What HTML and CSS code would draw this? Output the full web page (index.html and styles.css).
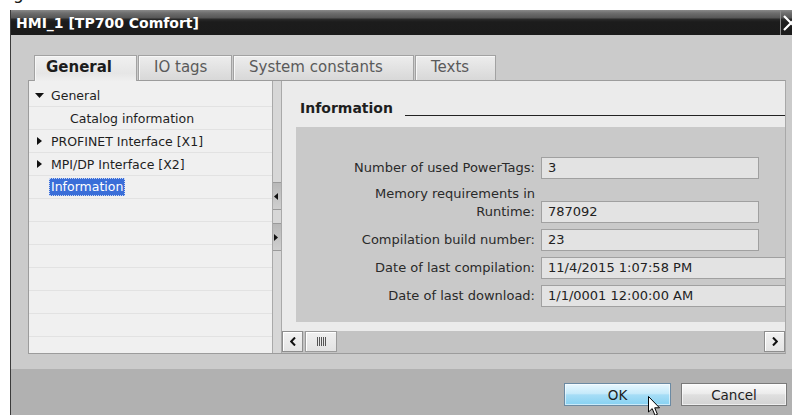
FILE: index.html
```html
<!DOCTYPE html>
<html lang="en">
<head>
<meta charset="utf-8">
<title>HMI_1 [TP700 Comfort]</title>
<link rel="stylesheet" href="styles.css">
</head>
<body>
<div class="page-top"><span class="cut-text">g</span></div>

<div class="dialog">
  <div class="titlebar">
    <span class="title">HMI_1 [TP700 Comfort]</span>
    <div class="close">
      <svg width="16" height="16" viewBox="0 0 16 16"><path d="M1 1 L15 15 M15 1 L1 15" stroke="#fff" stroke-width="2.2" fill="none"/></svg>
    </div>
  </div>

  <div class="dlg-body">
    <div class="tabstrip">
      <div class="tab active tab-general">General</div>
      <div class="tab tab-io">IO tags</div>
      <div class="tab tab-sys">System constants</div>
      <div class="tab tab-texts">Texts</div>
    </div>

    <div class="panel">
      <div class="tree">
        <div class="row"><span class="caret"><svg width="9" height="5" viewBox="0 0 9 5"><path d="M0 0 H9 L4.5 5 Z" fill="#111"/></svg></span>General</div>
        <div class="row child">Catalog information</div>
        <div class="row"><span class="caret"><svg class="c-right" width="5" height="8" viewBox="0 0 5 8"><path d="M0 0 L5 4 L0 8 Z" fill="#111"/></svg></span>PROFINET Interface [X1]</div>
        <div class="row"><span class="caret"><svg class="c-right" width="5" height="8" viewBox="0 0 5 8"><path d="M0 0 L5 4 L0 8 Z" fill="#111"/></svg></span>MPI/DP Interface [X2]</div>
        <div class="row"><span class="sel">Information</span></div>
        <div class="row"></div>
        <div class="row"></div>
        <div class="row"></div>
        <div class="row"></div>
        <div class="row"></div>
        <div class="row"></div>
        <div class="row"></div>
      </div>

      <div class="splitter">
        <div class="split-btn"><svg width="4" height="7" viewBox="0 0 4 7"><path d="M4 0 L0 3.5 L4 7 Z" fill="#111"/></svg></div>
        <div class="split-btn"><svg width="4" height="7" viewBox="0 0 4 7"><path d="M0 0 L4 3.5 L0 7 Z" fill="#111"/></svg></div>
      </div>

      <div class="pane">
        <div class="pane-view">
          <div class="heading">
            <span class="heading-text">Information</span>
            <span class="rule"></span>
          </div>
          <div class="form-box">
            <div class="form">
              <div class="label">Number of used PowerTags:</div>
              <div class="field">3</div>
              <div class="label">Memory requirements in<br>Runtime:</div>
              <div class="field">787092</div>
              <div class="label">Compilation build number:</div>
              <div class="field">23</div>
              <div class="label">Date of last compilation:</div>
              <div class="field wide">11/4/2015 1:07:58 PM</div>
              <div class="label">Date of last download:</div>
              <div class="field wide">1/1/0001 12:00:00 AM</div>
            </div>
          </div>
        </div>
        <div class="hscroll">
          <div class="sb-btn"><svg width="6" height="9" viewBox="0 0 6 9"><path d="M5 0.5 L1.2 4.5 L5 8.5" stroke="#111" stroke-width="2" fill="none"/></svg></div>
          <div class="sb-thumb"><svg width="9" height="9" viewBox="0 0 9 9"><path d="M0.5 0 V9 M2.5 0 V9 M4.5 0 V9 M6.5 0 V9 M8.5 0 V9" stroke="#555" stroke-width="1" fill="none"/></svg></div>
          <div class="sb-track"></div>
          <div class="sb-btn"><svg width="6" height="9" viewBox="0 0 6 9"><path d="M1 0.5 L4.8 4.5 L1 8.5" stroke="#111" stroke-width="2" fill="none"/></svg></div>
        </div>
      </div>
    </div>
  </div>

  <div class="footer">
    <button class="btn btn-ok">OK</button>
    <button class="btn btn-cancel">Cancel</button>
  </div>
</div>

<svg class="cursor" width="14" height="21" viewBox="0 0 14 21">
  <path d="M0.5 0.5 L0.5 16 L4.2 12.6 L7 19.3 L9.4 18.3 L6.7 11.8 L11.5 11.8 Z" fill="#fff" stroke="#000" stroke-width="1" stroke-linejoin="round"/>
</svg>
</body>
</html>
```

FILE: styles.css
```css
* { box-sizing: border-box; }

html, body { margin: 0; padding: 0; }

body {
  width: 792px;
  height: 415px;
  overflow: hidden;
  position: relative;
  background: #fff;
  font-family: "DejaVu Sans", "Liberation Sans", sans-serif;
  color: #222;
}

/* last line of the page above the dialog, mostly scrolled away */
.page-top {
  height: 10px;
  overflow: hidden;
  padding-left: 13px;
}
.cut-text {
  display: block;
  font-size: 17px;
  line-height: 17px;
  margin-top: -15px;
  color: #1a1a1a;
}

/* dialog window */
.dialog {
  margin-left: 10px;
  width: 790px;
  border-left: 1px solid #3b3b3b;
}

.titlebar {
  height: 25px;
  display: flex;
  align-items: center;
  background: linear-gradient(#8a8a8a 0, #6e6e6e 3px, #565656 8px, #2a2a2a 9px, #1c1c1c 12px, #1b1b1b 25px);
}
.title {
  flex: 1;
  padding-left: 5px;
  color: #fff;
  font-weight: bold;
  font-size: 14px;
}
.close {
  width: 20px;
  height: 25px;
  border-left: 1px solid #8a8a8a;
  padding: 5px 0 0 2px;
}
.close svg { display: block; }

.dlg-body {
  height: 334px;
  background: #cbcbcb;
  padding: 20px 0 0 17px;
}

/* tabs */
.tabstrip {
  display: flex;
  height: 25px;
  padding-left: 6px;
  position: relative;
  z-index: 1;
}
.tab {
  height: 25px;
  margin-right: 1px;
  padding-left: 15px;
  font-size: 15px;
  line-height: 23px;
  color: #5a5a5a;
  white-space: nowrap;
  border: 1px solid #a2a2a2;
  border-bottom: none;
  background: linear-gradient(#ededed, #d8d8d8);
  box-shadow: inset 1px 1px 0 #f7f7f7;
}
.tab.active {
  height: 26px;
  padding-left: 11px;
  font-weight: bold;
  color: #1c1c1c;
  background: linear-gradient(#f0f0f0, #e6e6e6 70%, #efefef);
}
.tab-general { width: 103px; }
.tab-io { width: 94px; }
.tab-sys { width: 181px; margin-right: 1px; }
.tab-texts { width: 81px; }

/* panel below the tabs */
.panel {
  width: 758px;
  height: 274px;
  display: flex;
  border: 1px solid #9c9c9c;
  border-right-color: #a8a8a8;
}

.tree {
  width: 243px;
  background: #f0f0f0;
  padding-top: 3px;
  overflow: hidden;
  font-size: 12.5px;
}
.row {
  height: 23px;
  border-bottom: 1px solid #e2e2e2;
  display: flex;
  align-items: center;
  padding-left: 6px;
  color: #1e1e1e;
  white-space: nowrap;
}
.caret {
  width: 16px;
  display: flex;
  align-items: center;
}
.caret svg { display: block; }
.caret .c-right { margin-left: 2px; }
.row.child { padding-left: 41px; }
.sel {
  margin-left: 14px;
  height: 18px;
  line-height: 16px;
  padding: 0 1px;
  background: #3a6ed8;
  color: #fff;
  border: 1px dotted #c9d7f4;
}

.splitter {
  width: 10px;
  background: #d7d7d7;
  border-left: 1px solid #a9a9a9;
  border-right: 1px solid #a9a9a9;
  padding-top: 101px;
  display: flex;
  flex-direction: column;
  gap: 13px;
}
.split-btn {
  height: 28px;
  background: linear-gradient(#b8b8b8, #cfcfcf);
  border-top: 1px solid #9a9a9a;
  border-bottom: 1px solid #9a9a9a;
  display: flex;
  align-items: center;
  padding-left: 1px;
}
.split-btn svg { display: block; }

.pane {
  flex: 1;
  min-width: 0;
  display: flex;
  flex-direction: column;
}
.pane-view {
  height: 250px;
  background: #ebebeb;
  padding-left: 14px;
  overflow: hidden;
}
.heading {
  height: 46px;
  display: flex;
  align-items: flex-start;
  padding: 17px 0 0 4px;
}
.heading-text {
  font-size: 14px;
  font-weight: bold;
  line-height: 20px;
  color: #1e1e1e;
}
.rule {
  flex: 1;
  height: 1px;
  margin: 17px 0 0 12px;
  background: #222;
}

.form-box {
  height: 195px;
  background: #c9c9c9;
  padding-top: 30px;
  overflow: hidden;
}
.form {
  display: grid;
  grid-template-columns: 239px auto;
  column-gap: 6px;
  row-gap: 6px;
  align-items: end;
  justify-items: start;
}
.label {
  justify-self: end;
  text-align: right;
  font-size: 13px;
  line-height: 18px;
  padding-bottom: 2px;
  color: #2a2a2a;
  white-space: nowrap;
}
.field {
  width: 218px;
  height: 22px;
  border: 1px solid #a0a0a0;
  background: #e3e3e3;
  padding: 0 6px;
  font-size: 13px;
  line-height: 20px;
  color: #222;
  white-space: nowrap;
}
.field.wide { width: 262px; }

.hscroll {
  height: 22px;
  background: #c3c3c3;
  display: flex;
  align-items: flex-start;
}
.sb-btn {
  width: 21px;
  height: 21px;
  background: linear-gradient(#f2f2f2, #e4e4e4);
  border: 1px solid #8e8e8e;
  box-shadow: inset 1px 1px 0 #fff;
  display: flex;
  align-items: center;
  justify-content: center;
}
.sb-btn svg, .sb-thumb svg { display: block; }
.sb-thumb {
  width: 32px;
  height: 21px;
  margin-left: 2px;
  background: linear-gradient(#f0f0f0, #e2e2e2);
  border: 1px solid #9a9a9a;
  box-shadow: inset 1px 1px 0 #fff;
  display: flex;
  align-items: center;
  justify-content: center;
}
.sb-track { flex: 1; }

/* button row */
.footer {
  height: 60px;
  background: #b1b1b1;
  display: flex;
  justify-content: flex-end;
  align-items: flex-start;
  gap: 10px;
  padding: 14px 13px 0 0;
}
.btn {
  height: 23px;
  padding: 0;
  font-family: "DejaVu Sans", "Liberation Sans", sans-serif;
  font-size: 13.5px;
  color: #1e1e1e;
  cursor: default;
}
.btn-ok {
  width: 107px;
  border: 1px solid #6b8aa3;
  background: linear-gradient(#e8f7fe 0%, #c6eafa 45%, #a6ddf6 52%, #86d1f2 100%);
  box-shadow: inset 0 0 0 1px rgba(255, 255, 255, 0.55);
}
.btn-cancel {
  width: 106px;
  border: 1px solid #7a7a7a;
  background: linear-gradient(#fafafa 0%, #ececec 45%, #dfdfdf 52%, #d3d3d3 100%);
  box-shadow: inset 0 0 0 1px rgba(255, 255, 255, 0.6);
}

/* mouse pointer resting on the OK button */
.cursor {
  position: absolute;
  left: 648px;
  top: 396px;
}
```
